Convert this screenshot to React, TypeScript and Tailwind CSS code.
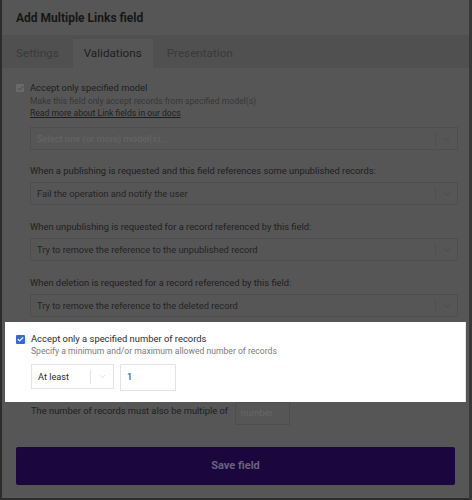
import { Check, ChevronDown } from "lucide-react";

const font = { fontFamily: "Roboto, 'Liberation Sans', sans-serif" };

function DimSelect({ value, placeholder }: { value?: string; placeholder?: string }) {
  return (
    <div className="flex h-[23px] items-center border border-[#4e4e4e]">
      <span className={`flex-1 pl-[6px] text-[9.3px] ${placeholder ? "text-[#666666]" : "text-[#242424]"}`}>
        {value ?? placeholder}
      </span>
      <span className="h-[14px] w-px bg-[#4f4f4f]" />
      <span className="flex w-[21px] justify-center text-[#4a4a4a]">
        <ChevronDown className="h-[10px] w-[10px]" strokeWidth={2} />
      </span>
    </div>
  );
}

function DimLabel({ children }: { children: React.ReactNode }) {
  return <div className="text-[9.35px] leading-[14px] text-[#202020]">{children}</div>;
}

export default function App() {
  return (
    <div className="flex h-[500px] w-[472px] bg-[#2c2c2c]" style={font}>
      <div className="ml-[2px] flex h-[498px] w-[467px] flex-col bg-[#565656]">
        {/* header */}
        <div className="flex h-[35px] items-center pl-[14px] text-[12px] font-bold text-[#161616]">
          Add Multiple Links field
        </div>

        {/* tabs */}
        <div className="flex h-[33px] items-end gap-[3px] bg-[#505050] pl-[3px] text-[11.7px]">
          <div className="flex h-[29px] items-center px-[11px] text-[#3a3a3a]">Settings</div>
          <div className="flex h-[29px] items-center bg-[#565656] px-[11px] text-[#1e1e1e]">Validations</div>
          <div className="flex h-[29px] items-center px-[11px] text-[#3a3a3a]">Presentation</div>
        </div>

        {/* content */}
        <div className="flex flex-col pt-[13px]">
          <div className="flex gap-[6px] pl-[14px] pr-[11px]">
            <div className="mt-[3px] flex h-[8px] w-[8px] items-center justify-center rounded-[1px] bg-[#6a6a6a]">
              <Check className="h-[7px] w-[7px] text-[#555555]" strokeWidth={4} />
            </div>
            <div className="flex flex-1 flex-col">
              <div className="text-[9.4px] leading-[14px] text-[#1e1e1e]">Accept only specified model</div>
              <div className="text-[8.6px] leading-[12px] text-[#363636]">
                Make this field only accept records from specified model(s)
              </div>
              <div className="text-[8.6px] leading-[12px] text-[#1e1e1e] underline">
                Read more about Link fields in our docs
              </div>
              <div className="mt-[8px]">
                <DimSelect placeholder="Select one (or more) model(s)..." />
              </div>

              <div className="mt-[14px]">
                <DimLabel>When a publishing is requested and this field references some unpublished records:</DimLabel>
              </div>
              <div className="mt-[4px]">
                <DimSelect value="Fail the operation and notify the user" />
              </div>

              <div className="mt-[15px]">
                <DimLabel>When unpublishing is requested for a record referenced by this field:</DimLabel>
              </div>
              <div className="mt-[4px]">
                <DimSelect value="Try to remove the reference to the unpublished record" />
              </div>

              <div className="mt-[15px]">
                <DimLabel>When deletion is requested for a record referenced by this field:</DimLabel>
              </div>
              <div className="mt-[4px]">
                <DimSelect value="Try to remove the reference to the deleted record" />
              </div>
            </div>
          </div>

          {/* highlighted section */}
          <div className="ml-[3px] mt-[5px] flex h-[80px] w-[461px] gap-[6px] border-r border-[#e6e6e6] bg-white pl-[11px] pt-[13px]">
            <div className="flex h-[9px] w-[9px] items-center justify-center rounded-[1px] bg-[#2d6be4]">
              <Check className="h-[7px] w-[7px] text-white" strokeWidth={4} />
            </div>
            <div className="flex flex-col">
              <div className="text-[9.4px] leading-[8px] text-[#2b2b2b]">Accept only a specified number of records</div>
              <div className="mt-[2px] text-[8.6px] leading-[12px] text-[#7b7b7b]">
                Specify a minimum and/or maximum allowed number of records
              </div>
              <div className="mt-[7px] flex items-start gap-[6px]">
                <div className="flex h-[25px] w-[83px] items-center border border-[#e4e4e4]">
                  <span className="flex-1 pl-[6px] text-[9.2px] text-[#2b2b2b]">At least</span>
                  <span className="h-[14px] w-px bg-[#e2e2e2]" />
                  <span className="flex w-[22px] justify-center text-[#c8c8c8]">
                    <ChevronDown className="h-[9px] w-[9px]" strokeWidth={1.5} />
                  </span>
                </div>
                <div className="flex h-[27px] w-[56px] items-center border border-[#e4e4e4] pl-[6px] text-[9.4px] text-[#2b2b2b]">
                  1
                </div>
              </div>
            </div>
          </div>

          <div className="flex items-start gap-[7px] pl-[29px]">
            <div className="mt-[2px]">
              <DimLabel>The number of records must also be multiple of</DimLabel>
            </div>
            <div className="flex h-[23px] w-[55px] items-center border border-[#4e4e4e] pl-[5px] text-[9.4px] text-[#666666]">
              number
            </div>
          </div>

          <div className="mx-[14px] mt-[22px] flex h-[38px] items-center justify-center rounded-[2px] bg-[#1b063d] text-[11px] font-bold text-[#696280]">
            Save field
          </div>
        </div>
      </div>
      <div className="h-[500px] w-[3px] bg-[#383838]" />
    </div>
  );
}
